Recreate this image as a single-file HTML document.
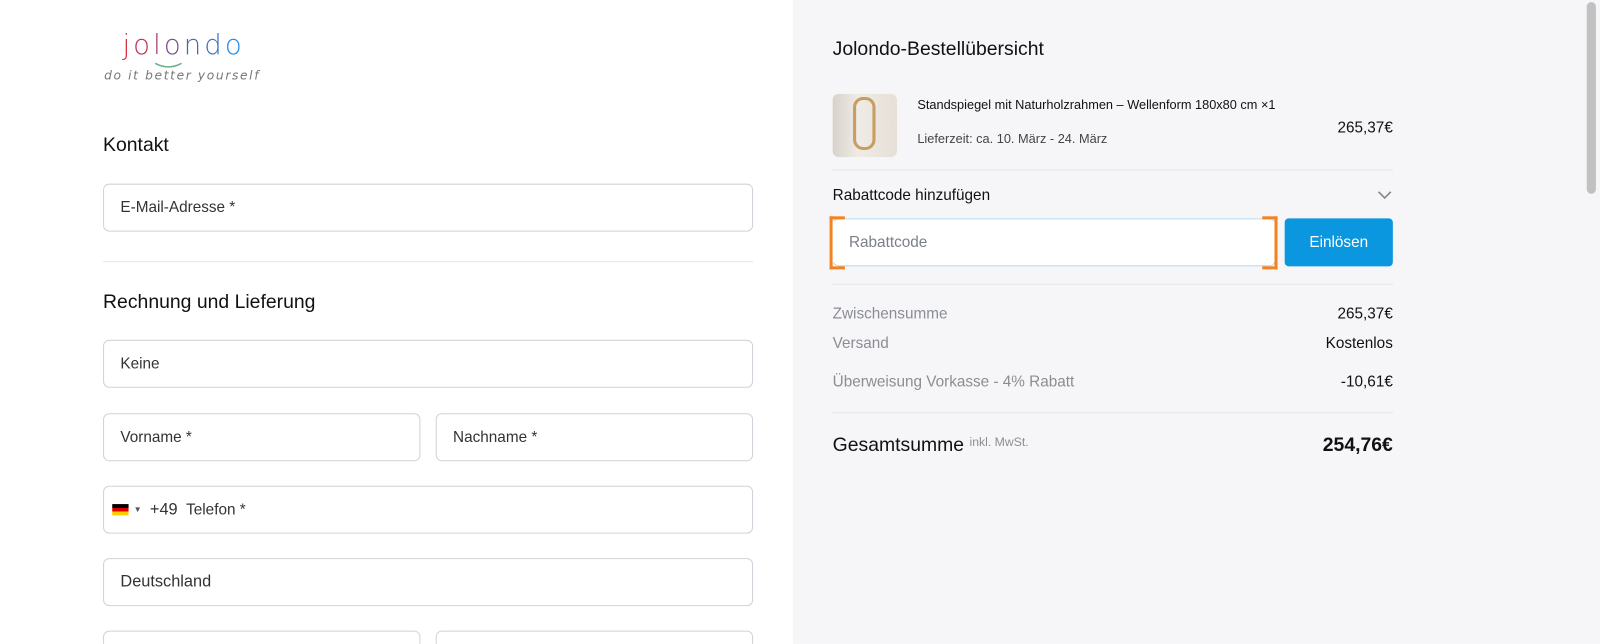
<!DOCTYPE html>
<html style="width:1600px;height:644px;overflow:hidden"><head><meta charset="utf-8"><style>
*{box-sizing:border-box;margin:0;padding:0}
body{width:1600px;height:644px;overflow:hidden;font-family:"Liberation Sans",sans-serif;background:#fff;position:relative;color:#111}
#w{position:absolute;left:0;top:0;width:1568px;height:631px;overflow:hidden;transform:scale(1.0204);transform-origin:0 0}
.abs{position:absolute}
.inp{position:absolute;border:1px solid #cfd2d8;border-radius:6px;background:#fff;font-size:15px;color:#333;padding-left:16px;display:flex;align-items:center;height:47px}
h2{position:absolute;font-size:19px;font-weight:normal;color:#111}
.right{position:absolute;left:777px;top:0;width:800px;height:700px;background:#f6f6f8}
.row{position:absolute;left:816px;width:549px;font-size:15px;display:flex;justify-content:space-between}
.g{color:#8a8d93}
</style></head><body><div id="w">
<div class="abs" style="left:120px;top:29px;font-size:27px;letter-spacing:3px;font-family:'DejaVu Sans',sans-serif;font-weight:300">
<span style="color:#d6293b">j</span><span style="color:#c23252">o</span><span style="color:#a63a6a">l</span><span style="color:#7d4c8c">o</span><span style="color:#5a5ea8">n</span><span style="color:#3b6fc2">d</span><span style="color:#1e8ce6">o</span></div>
<svg class="abs" style="left:150px;top:60px" width="30" height="8"><path d="M2 2 Q15 9 28 2" stroke="#6bb48a" stroke-width="1.5" fill="none"/></svg>
<div class="abs" style="left:102px;top:67px;font-size:12px;color:#777;letter-spacing:1.6px;font-style:italic;font-family:'DejaVu Sans',sans-serif">do it better yourself</div>
<h2 style="left:101px;top:132px">Kontakt</h2>
<div class="inp" style="left:101px;top:180px;width:637px">E-Mail-Adresse *</div>
<div class="abs" style="left:101px;top:256px;width:637px;height:1px;background:#e3e4e7"></div>
<h2 style="left:101px;top:286px">Rechnung und Lieferung</h2>
<div class="inp" style="left:101px;top:333px;width:637px">Keine</div>
<div class="inp" style="left:101px;top:405px;width:311px">Vorname *</div>
<div class="inp" style="left:427px;top:405px;width:311px">Nachname *</div>
<div class="inp" style="left:101px;top:476px;width:637px;padding-left:8px">
<span style="display:inline-block;width:16px;height:11px;background:linear-gradient(#000 33%,#d00 33%,#d00 66%,#fc0 66%)"></span><span style="font-size:8px;color:#555;margin:0 8px 0 5px">▼</span><span style="font-size:16px">+49</span>&nbsp;&nbsp;Telefon *</div>
<div class="inp" style="left:101px;top:547px;width:637px;font-size:16px">Deutschland</div>
<div class="inp" style="left:101px;top:618px;width:311px"></div>
<div class="inp" style="left:427px;top:618px;width:311px"></div>

<div class="right"></div>
<div class="abs" style="left:1555px;top:2px;width:9px;height:188px;background:#c1c1c1;border-radius:5px"></div>
<div class="abs" style="left:816px;top:38px;font-size:19px">Jolondo-Bestellübersicht</div>
<div class="abs" style="left:816px;top:92px;width:63px;height:62px;border-radius:6px;background:linear-gradient(90deg,#d8d2cc,#efebe6 40%,#e6dfd6);overflow:hidden">
<div style="position:absolute;left:20px;top:3px;width:22px;height:52px;border:3px solid #c79d62;border-radius:10px"></div></div>
<div class="abs" style="left:899px;top:96px;font-size:12.5px">Standspiegel mit Naturholzrahmen – Wellenform 180x80 cm ×1</div>
<div class="abs" style="left:899px;top:129px;font-size:12.5px;color:#444">Lieferzeit: ca. 10. März - 24. März</div>
<div class="abs" style="left:1300px;top:117px;font-size:15px;width:65px;text-align:right">265,37€</div>
<div class="abs" style="left:816px;top:166px;width:549px;height:1px;background:#e3e4e7"></div>
<div class="abs" style="left:816px;top:183px;font-size:15px">Rabattcode hinzufügen</div>
<svg class="abs" style="left:1350px;top:186px" width="14" height="10"><path d="M1 2 L7 8 L13 2" stroke="#888" stroke-width="1.6" fill="none"/></svg>
<div class="abs" style="left:816px;top:214px;width:434px;height:47px;background:#fff;border:1px solid #b9dcf3;border-radius:6px;padding-left:15px;display:flex;align-items:center;font-size:15px;color:#7b7f87">Rabattcode</div>
<div class="abs" style="left:813px;top:212px;width:15px;height:52px;border:3px solid #f58220;border-right:none"></div>
<div class="abs" style="left:816px;top:217px;width:12px;height:40px;background:#fff"></div>
<div class="abs" style="left:1237px;top:212px;width:15px;height:52px;border:3px solid #f58220;border-left:none"></div>
<div class="abs" style="left:1237px;top:217px;width:12px;height:40px;background:#fff"></div>
<div class="abs" style="left:1259px;top:214px;width:106px;height:47px;background:#0b96e0;border-radius:4px;color:#fff;font-size:15px;display:flex;align-items:center;justify-content:center">Einlösen</div>
<div class="abs" style="left:816px;top:278px;width:549px;height:1px;background:#e3e4e7"></div>
<div class="row" style="top:299px"><span class="g">Zwischensumme</span><span>265,37€</span></div>
<div class="row" style="top:328px"><span class="g">Versand</span><span>Kostenlos</span></div>
<div class="row" style="top:366px"><span class="g">Überweisung Vorkasse - 4% Rabatt</span><span>-10,61€</span></div>
<div class="abs" style="left:816px;top:404px;width:549px;height:1px;background:#e3e4e7"></div>
<div class="row" style="top:426px;align-items:baseline"><span style="font-size:19px">Gesamtsumme <span class="g" style="font-size:12px;vertical-align:5px">inkl. MwSt.</span></span><span style="font-size:19px;font-weight:bold">254,76€</span></div>
</div></body></html>
